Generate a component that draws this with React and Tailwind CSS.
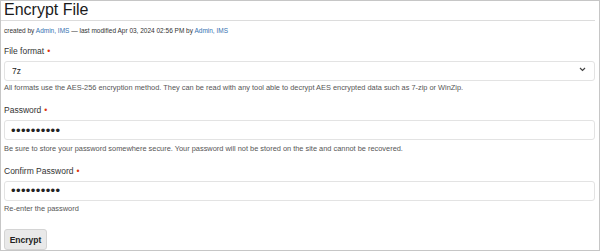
import { useState } from 'react'

const labelClass = 'block text-[8.5px] leading-[12px] text-[#333]'
const boxClass = 'mt-[4px] h-[20px] w-full rounded-[3px] border border-[#e3e3e3] bg-white px-[6px] text-[#222] outline-none'
const helpClass = 'mt-[2px] text-[7.4px] leading-[10px] text-[#555]'

function Required() {
  return <span className="ml-[3px] text-[#de350b]">•</span>
}

export default function App() {
  const [format, setFormat] = useState('7z')

  return (
    <div
      className="box-border h-[251px] w-[600px] overflow-hidden border border-[#c6c6c6] bg-white pr-[4px]"
      style={{ fontFamily: '"Liberation Sans", Arial, sans-serif' }}
    >
      {/* Title */}
      <div className="h-[20px] border-b border-[#dcdcdc] pl-[3px]">
        <h1 className="text-[16px] leading-[18px] text-[#1a1a1a]">Encrypt File</h1>
      </div>

      <div className="pl-[3px]">
        <p className="mt-[6px] text-[6.5px] leading-[8px] text-[#333]">
          created by <a className="text-[#3572b0]">Admin, IMS</a> — last modified Apr 03, 2024 02:56 PM by{' '}
          <a className="text-[#3572b0]">Admin, IMS</a>
        </p>

        <form onSubmit={(e) => e.preventDefault()}>
          {/* File format */}
          <div className="mt-[10px]">
            <label htmlFor="format" className={labelClass}>
              File format<Required />
            </label>
            <div className="relative">
              <select
                id="format"
                value={format}
                onChange={(e) => setFormat(e.target.value)}
                className={boxClass + ' appearance-none pl-[7px] text-[8.5px]'}
              >
                <option value="7z">7z</option>
                <option value="zip">zip</option>
              </select>
              <svg
                className="pointer-events-none absolute right-[9px] top-[10px]"
                width="7"
                height="5"
                viewBox="0 0 7 5"
                fill="none"
              >
                <path d="M1 1l2.5 2.5L6 1" stroke="#444" strokeWidth="1.2" />
              </svg>
            </div>
            <p className={helpClass}>
              All formats use the AES-256 encryption method. They can be read with any tool able to decrypt AES encrypted data such as 7-zip or WinZip.
            </p>
          </div>

          {/* Password */}
          <div className="mt-[11px]">
            <label htmlFor="password" className={labelClass}>
              Password<Required />
            </label>
            <input
              id="password"
              type="password"
              defaultValue="secretpass"
              className={boxClass + ' text-[13px] tracking-[0.4px]'}
            />
            <p className={helpClass}>
              Be sure to store your password somewhere secure. Your password will not be stored on the site and cannot be recovered.
            </p>
          </div>

          {/* Confirm */}
          <div className="mt-[11px]">
            <label htmlFor="confirm" className={labelClass}>
              Confirm Password<Required />
            </label>
            <input
              id="confirm"
              type="password"
              defaultValue="secretpass"
              className={boxClass + ' text-[13px] tracking-[0.4px]'}
            />
            <p className={helpClass}>Re-enter the password</p>
          </div>

          <button
            type="submit"
            className="mt-[15px] h-[21px] w-[43px] rounded-[3px] border border-[#d4d4d4] bg-[#e9e9e9] text-[8.5px] font-semibold text-[#222]"
          >
            Encrypt
          </button>
        </form>
      </div>
    </div>
  )
}
